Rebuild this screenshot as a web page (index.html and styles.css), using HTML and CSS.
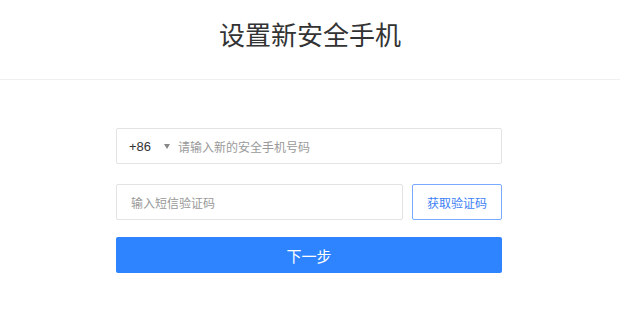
FILE: index.html
```html
<!DOCTYPE html>
<html lang="zh-CN">
<head>
<meta charset="utf-8">
<title>设置新安全手机</title>
<link rel="stylesheet" href="styles.css">
</head>
<body>
<header class="header">
  <h1 class="title">设置新安全手机</h1>
</header>
<main class="form">
  <div class="field phone">
    <span class="code">+86</span>
    <span class="caret"></span>
    <span class="placeholder">请输入新的安全手机号码</span>
  </div>
  <div class="row">
    <div class="field sms">
      <span class="placeholder">输入短信验证码</span>
    </div>
    <button class="btn-code" type="button">获取验证码</button>
  </div>
  <button class="btn-next" type="button">下一步</button>
</main>
</body>
</html>
```
FILE: styles.css
```css
* { box-sizing: border-box; }
html, body {
  margin: 0;
  padding: 0;
  background: #fff;
  font-family: "Noto Sans CJK SC", "Noto Sans", "Liberation Sans", sans-serif;
  color: #333;
}
.header {
  height: 80px;
  border-bottom: 1px solid #f0f0f0;
  padding-top: 19px;
}
.title {
  margin: 0;
  text-align: center;
  font-size: 26px;
  line-height: 30px;
  font-weight: 400;
  color: #333;
}
.form {
  width: 386px;
  margin-left: calc(50% - 194px);
  margin-top: 48px;
  display: flex;
  flex-direction: column;
}
.field {
  height: 36px;
  border: 1px solid #e3e3e3;
  border-radius: 2px;
  display: flex;
  align-items: center;
  font-size: 12px;
}
.phone { padding-left: 12px; }
.code {
  font-size: 13px;
  color: #333;
  font-family: "Liberation Sans", "Noto Sans CJK SC", sans-serif;
}
.caret {
  width: 0;
  height: 0;
  border-left: 3.5px solid transparent;
  border-right: 3.5px solid transparent;
  border-top: 5px solid #888;
  margin-left: 13px;
  margin-right: 8px;
}
.placeholder { color: #999; }
.row {
  display: flex;
  gap: 9px;
  margin-top: 20px;
}
.sms {
  width: 287px;
  padding-left: 14px;
}
.btn-code {
  width: 90px;
  height: 36px;
  border: 1px solid #78aaff;
  border-radius: 2px;
  background: #fff;
  color: #3d7ff5;
  font-size: 12px;
  font-family: inherit;
  padding: 0;
}
.btn-next {
  margin-top: 17px;
  height: 36px;
  width: 100%;
  border: none;
  border-radius: 2px;
  background: #2e84ff;
  color: #fff;
  font-size: 15px;
  font-family: inherit;
  padding: 0;
}
```
